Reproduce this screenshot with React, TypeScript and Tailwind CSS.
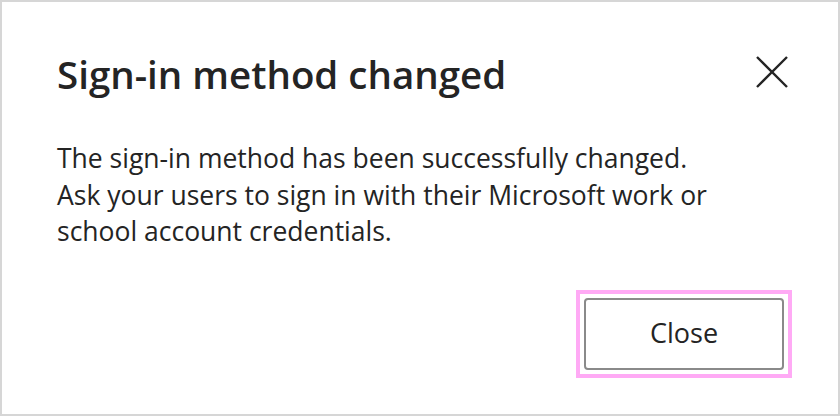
export default function App() {
  return (
    <div
      className="w-[840px] h-[416px] bg-white border-2 border-[#d6d6d6] flex flex-col pl-[55px] pr-[46px] pt-[47px] text-[#242424]"
      style={{ fontFamily: '"Open Sans", "Noto Sans", sans-serif' }}
    >
      <div className="flex items-start justify-between">
        <h2 className="text-[38.5px] leading-[50px] font-semibold">Sign-in method changed</h2>
        <button type="button" aria-label="Close" className="mt-[7px] mr-[4px] text-[#242424]">
          <svg width="32" height="32" viewBox="0 0 32 32" fill="none" stroke="currentColor" strokeWidth="2.4">
            <path d="M1 1L31 31M31 1L1 31" />
          </svg>
        </button>
      </div>

      <p className="mt-[41px] w-[720px] text-[26.5px] leading-[36.5px]">
        The sign-in method has been successfully changed.
        <br />
        Ask your users to sign in with their Microsoft work or
        <br />
        school account credentials.
      </p>

      <div className="mt-[40px] flex justify-end">
        <div className="border-4 border-[#ffaaf5] p-1">
          <button
            type="button"
            className="w-[200px] h-[72px] rounded-[4px] border-2 border-[#8a8a8a] bg-white text-[27px] text-[#242424]"
          >
            Close
          </button>
        </div>
      </div>
    </div>
  );
}
